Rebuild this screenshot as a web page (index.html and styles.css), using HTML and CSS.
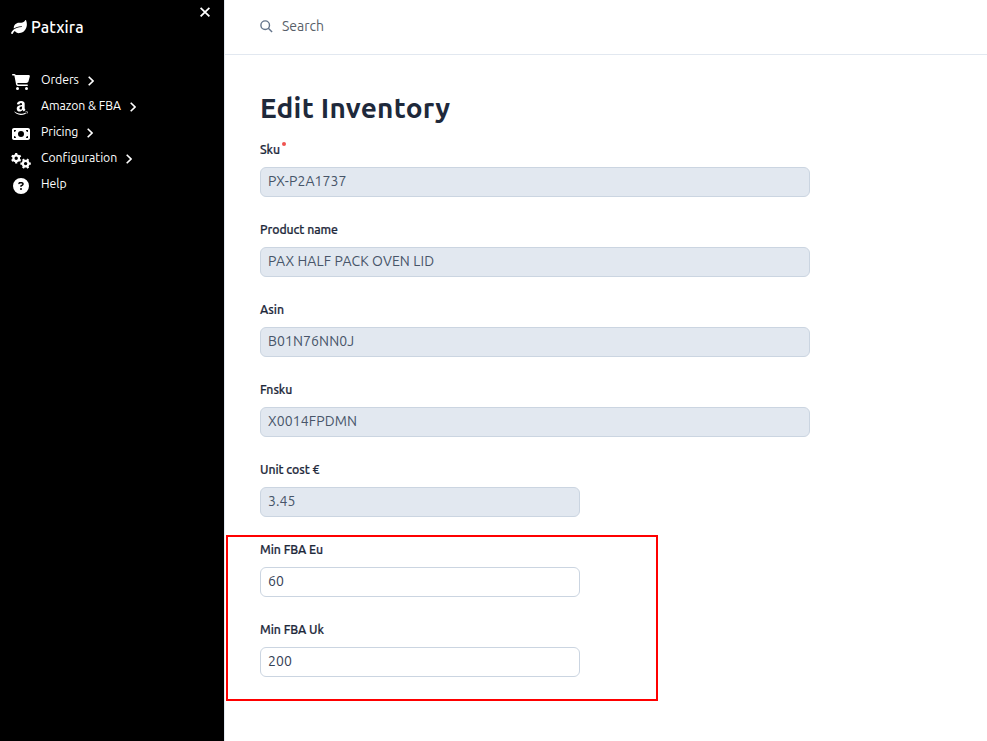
FILE: index.html
```html
<!DOCTYPE html>
<html lang="en">
<head>
<meta charset="utf-8">
<title>Edit Inventory</title>
<link rel="stylesheet" href="styles.css">
</head>
<body>
<div class="app">
  <aside class="sidebar">
    <div class="brand">
      <svg class="leaf" viewBox="0 0 576 512"><path d="M546.2 9.7c-5.6-12.5-21.6-13-28.3-1.2C486.9 62.4 431.4 96 368 96h-80C182 96 96 182 96 288c0 7 .8 13.7 1.5 20.5C161.3 262.8 253.4 224 384 224c8.8 0 16 7.2 16 16s-7.2 16-16 16C132.6 256 26 410.1 2.4 468c-6.6 16.3 1.2 34.9 17.5 41.6 16.4 6.8 35-1.1 41.8-17.3 1.5-3.6 20.9-47.9 71.9-90.6 32.4 43.9 94 85.8 174.9 77.2C465.5 467.5 576 326.7 576 154.3c0-50.2-10.8-102.2-29.8-144.6z"/></svg>
      <span class="brand-name">Patxira</span>
      <svg class="close" viewBox="0 0 10 10"><path d="M.6 .9l8.8 8.4M9.4 .9L.6 9.3"/></svg>
    </div>
    <nav class="menu">
      <a class="item"><svg class="icon" viewBox="0 0 576 512"><path d="M0 24C0 10.7 10.7 0 24 0H69.5c22 0 41.5 12.8 50.6 32h411c26.3 0 45.5 25 38.6 50.4l-41 152.3c-8.5 31.4-37 53.3-69.5 53.3H170.7l5.4 28.5c2.2 11.3 12.1 19.5 23.6 19.5H488c13.3 0 24 10.7 24 24s-10.7 24-24 24H199.7c-34.6 0-64.3-24.6-70.7-58.5L77.4 54.5c-.7-3.8-4-6.5-7.9-6.5H24C10.7 48 0 37.3 0 24zM128 464a48 48 0 1 1 96 0 48 48 0 1 1-96 0zm336-48a48 48 0 1 1 0 96 48 48 0 1 1 0-96z"/></svg><span class="item-text">Orders</span><svg class="chevron" viewBox="0 0 6 10"><path d="M.7 .7L5 5 .7 9.3"/></svg></a>
      <a class="item"><svg class="icon" viewBox="0 0 448 512"><path d="M257.2 162.7c-48.7 1.8-169.5 15.5-169.5 117.5 0 109.5 138.3 114 183.5 43.2 6.5 10.2 35.4 37.5 45.3 46.8l56.8-56S341 288.9 341 261.4V114.3C341 89 316.5 32 228.7 32 140.7 32 94 87 94 136.3l73.5 6.8c16.3-49.5 54.2-49.5 54.2-49.5 40.7-.1 35.5 29.8 35.5 69.1zm0 86.8c0 80-84.2 68-84.2 17.2 0-47.2 50.5-56.7 84.2-57.8v40.6zm136 163.5c-7.7 10-70 67-174.5 67S34.2 408.5 9.7 379c-6.8-7.7 1-11.3 5.5-8.3C88.5 415.2 203 488.5 387.7 401c7.5-3.7 13.3 2 5.5 12zm39.8 2.2c-6.5 15.8-16 26.8-21.2 31-5.5 4.5-9.5 2.7-6.5-3.8s19.3-46.5 12.7-55c-6.5-8.3-37-4.3-48-3.2-10.8 1-13 2-14-.3-2.3-5.7 21.7-15.5 37.5-17.5 15.7-1.8 41-.8 46 5.7 3.7 5.1 0 27.1-6.5 43.1z"/></svg><span class="item-text">Amazon &amp; FBA</span><svg class="chevron" viewBox="0 0 6 10"><path d="M.7 .7L5 5 .7 9.3"/></svg></a>
      <a class="item"><svg class="icon" viewBox="0 0 576 512"><path d="M64 64C28.7 64 0 92.7 0 128V384c0 35.3 28.7 64 64 64H512c35.3 0 64-28.7 64-64V128c0-35.3-28.7-64-64-64H64zm64 320H64V320c35.3 0 64 28.7 64 64zM64 192V128h64c0 35.3-28.7 64-64 64zM448 384c0-35.3 28.7-64 64-64v64H448zm64-192c-35.3 0-64-28.7-64-64h64v64zM288 160a96 96 0 1 1 0 192 96 96 0 1 1 0-192z"/></svg><span class="item-text">Pricing</span><svg class="chevron" viewBox="0 0 6 10"><path d="M.7 .7L5 5 .7 9.3"/></svg></a>
      <a class="item"><svg class="icon gears" viewBox="0 0 20 16"><g class="gear"><circle cx="5.2" cy="5.2" r="2.8"/><path d="M5.2 0v2.2M5.2 8.2v2.2M.7 2.6l1.9 1.1M7.8 6.7l1.9 1.1M.7 7.8l1.9-1.1M7.8 3.7l1.9-1.1"/></g><g class="gear"><circle cx="14.6" cy="10.6" r="2.8"/><path d="M9.4 10.6h2.2M17.6 10.6h2.2M12 6.1l1.1 1.9M16.1 13.2l1.1 1.9M17.2 6.1l-1.1 1.9M13.1 13.2L12 15.1"/></g></svg><span class="item-text">Configuration</span><svg class="chevron" viewBox="0 0 6 10"><path d="M.7 .7L5 5 .7 9.3"/></svg></a>
      <a class="item"><svg class="icon" viewBox="0 0 512 512"><path d="M256 512A256 256 0 1 0 256 0a256 256 0 1 0 0 512zM169.8 165.3c7.9-22.3 29.1-37.3 52.8-37.3h58.3c34.9 0 63.1 28.3 63.1 63.1c0 22.6-12.1 43.5-31.7 54.8L280 264.4c-.2 13-10.9 23.6-24 23.6c-13.3 0-24-10.7-24-24V250.5c0-8.6 4.6-16.5 12.1-20.8l44.3-25.4c4.7-2.7 7.6-7.7 7.6-13.1c0-8.4-6.8-15.1-15.1-15.1H222.6c-3.4 0-6.4 2.1-7.5 5.3l-.4 1.2c-4.4 12.5-18.2 19-30.6 14.6s-19-18.2-14.6-30.6l.4-1.2zM224 352a32 32 0 1 1 64 0 32 32 0 1 1-64 0z"/></svg><span class="item-text">Help</span></a>
    </nav>
  </aside>
  <main class="main">
    <header class="topbar">
      <svg class="search-icon" viewBox="0 0 13 13"><circle cx="5.2" cy="5.2" r="4.3"/><path d="M8.3 8.3l3.8 3.8"/></svg>
      <span class="search-text">Search</span>
    </header>
    <form class="form">
      <h1 class="title">Edit Inventory</h1>
      <div class="field"><label class="label">Sku<i class="required"></i></label><div class="input disabled">PX-P2A1737</div></div>
      <div class="field"><label class="label">Product name</label><div class="input disabled">PAX HALF PACK OVEN LID</div></div>
      <div class="field"><label class="label">Asin</label><div class="input disabled">B01N76NN0J</div></div>
      <div class="field"><label class="label">Fnsku</label><div class="input disabled">X0014FPDMN</div></div>
      <div class="field short"><label class="label">Unit cost €</label><div class="input disabled">3.45</div></div>
      <div class="field short"><label class="label">Min FBA Eu</label><div class="input">60</div></div>
      <div class="field short"><label class="label">Min FBA Uk</label><div class="input">200</div></div>
    </form>
    <div class="highlight"></div>
  </main>
</div>
</body>
</html>
```
FILE: styles.css
```css
* { box-sizing: border-box; }
body {
  margin: 0;
  background: #fff;
  color: #1e293b;
  font-family: Ubuntu, "Noto Sans", sans-serif;
  overflow: hidden;
}
svg { flex: none; display: block; }
.app { display: flex; height: 741px; }
.sidebar { width: 224px; flex: none; background: #000; color: #fff; }
.brand { display: flex; align-items: center; height: 54px; padding: 0 14px 0 11px; }
.leaf { width: 16px; height: 14px; fill: #fff; margin-right: 4px; }
.brand-name { font-size: 16px; font-weight: 500; line-height: 24px; letter-spacing: 0.1px; }
.close { width: 10px; height: 10px; margin: 0 0 30px auto; stroke: #fff; stroke-width: 1.8; fill: none; }
.menu { padding-top: 13px; }
.item { display: flex; align-items: center; height: 26px; padding-left: 12px; white-space: nowrap; }
.icon { width: 18px; height: 16px; margin: 4px 11px 0 0; fill: #fff; }
.gears { width: 20px; margin: 5px 10px 0 -1px; }
.gear { fill: none; stroke: #fff; stroke-width: 2.2; }
.item-text { font-size: 12.25px; line-height: 18px; margin-bottom: 1px; letter-spacing: -0.04px; }
.chevron { width: 6px; height: 10px; margin: 2px 0 0 9px; fill: none; stroke: #fff; stroke-width: 1.6; }
.main { position: relative; flex: 1; border-left: 1px solid #e2e8f0; }
.topbar { display: flex; align-items: center; height: 55px; padding: 0 0 2px 35px; border-bottom: 1px solid #e2e8f0; }
.search-icon { width: 13px; height: 13px; margin-right: 9px; fill: none; stroke: #64748b; stroke-width: 1.4; }
.search-text { font-size: 14px; line-height: 20px; color: #595f69; }
.form { padding: 32px 0 0 35px; }
.title { margin: 0 0 11px; font-size: 28px; line-height: 42px; font-weight: 700; letter-spacing: 0.25px; white-space: nowrap; }
.field { width: 550px; height: 80px; }
.short { width: 320px; }
.label { display: flex; height: 18px; margin-bottom: 9px; font-size: 12.25px; line-height: 20px; font-weight: 500; letter-spacing: -0.05px; -webkit-text-stroke: 0.2px #1e293b; white-space: nowrap; }
.required { width: 4px; height: 4px; margin: 2px 0 0 2px; border-radius: 50%; background: #ef5350; }
.input { height: 30px; padding: 0 7px; border: 1px solid #cbd5e1; border-radius: 6px; font-size: 14px; line-height: 27px; letter-spacing: 0.1px; color: #334155; white-space: nowrap; }
.disabled { background: #e2e8f0; color: #475569; }
.highlight { position: absolute; left: 1px; top: 535px; width: 432px; height: 166px; border: 2px solid #f00; }
```
